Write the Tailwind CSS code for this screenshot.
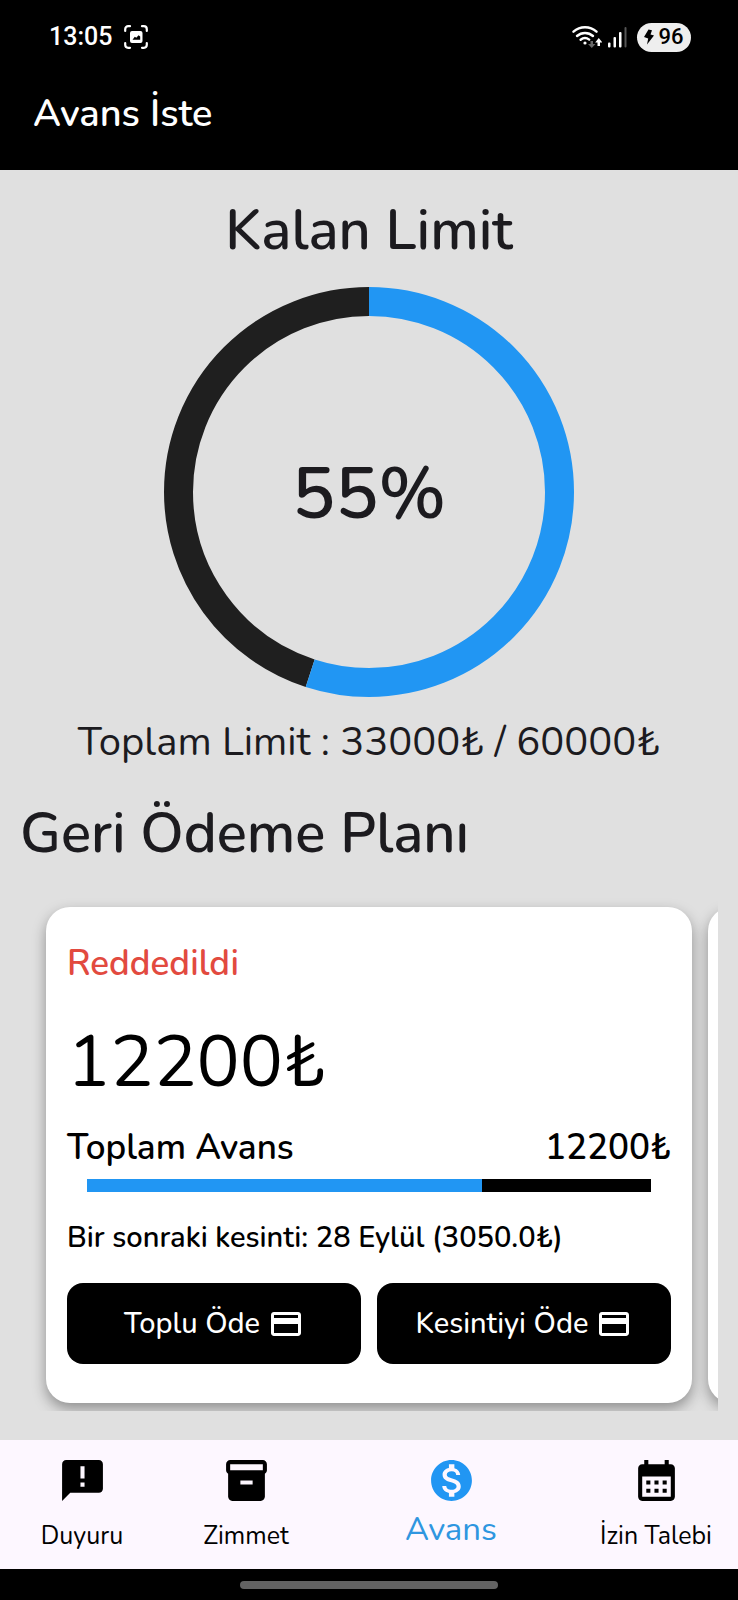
<!DOCTYPE html>
<html lang="tr">
<head>
<meta charset="utf-8">
<meta name="viewport" content="width=device-width, initial-scale=1">
<title>Avans İste</title>
<script src="https://cdn.jsdelivr.net/npm/@tailwindcss/browser@4"></script>
</head>
<body class="flex min-h-screen flex-col overflow-x-hidden bg-black font-['Nunito','Lato','Open_Sans',sans-serif] text-[#1c1b1f]">

<header class="bg-black pb-6 text-white">
  <div class="flex h-[74px] items-center justify-between pr-[47px] pl-[49px] font-['Roboto',sans-serif]">
    <div class="flex items-center gap-3">
      <span class="text-[25px] leading-9 font-medium">13:05</span>
      <svg class="size-6" viewBox="0 0 24 24" fill="none" stroke="currentColor" stroke-width="2.2" stroke-linecap="round" aria-hidden="true">
        <path d="M1.200 6V4.200a3 3 0 0 1 3-3H6M18 1.200h1.800a3 3 0 0 1 3 3V6M22.800 18v1.800a3 3 0 0 1-3 3H18M6 22.800H4.200a3 3 0 0 1-3-3V18"/>
        <path fill="currentColor" stroke="none" fill-rule="evenodd" d="M8 6h8.500a2 2 0 0 1 2 2v8a2 2 0 0 1-2 2H8a2 2 0 0 1-2-2V8a2 2 0 0 1 2-2zm.5 8.800h7.700v-3.200l-1.600-1.400-2.300 2.600-1.500-1z"/>
      </svg>
    </div>
    <div class="flex items-center">
      <svg class="h-6 w-[30px]" viewBox="0 0 30 24" fill="none" aria-hidden="true">
        <g stroke="#fff" stroke-width="2.400" stroke-linecap="round">
          <path d="M1.500 6.700a17 17 0 0 1 23 0"/>
          <path d="M5 11a12 12 0 0 1 16 0"/>
          <path d="M8.600 14.800a7 7 0 0 1 8.600-.2"/>
        </g>
        <circle cx="13" cy="18" r="1.600" fill="#fff"/>
        <path d="M18.500 16h2.500v3H23.500l-3.750 4-3.750-4h2.500z" fill="#666"/>
        <path d="M25.500 21h2.500V17.500h2.300L26.750 13l-3.550 4.500h2.300z" fill="#fff"/>
      </svg>
      <svg class="ml-[6px] h-[21px] w-5" viewBox="0 0 20 21" aria-hidden="true">
        <g fill="#fff"><rect x="0" y="15.500" width="2.500" height="5" rx="1"/><rect x="5.500" y="10" width="2.500" height="10.500" rx="1"/><rect x="11" y="5" width="2.500" height="15.500" rx="1"/></g>
        <rect x="16.500" y="0" width="2" height="20.500" rx="1" fill="#555"/>
      </svg>
      <div class="ml-[9px] flex h-[29px] w-[54px] items-center justify-center gap-1 rounded-full bg-[#eee] text-black">
        <svg class="h-4 w-[10px]" viewBox="0 0 10 16" fill="currentColor" aria-hidden="true"><path d="M4.500.5 8 1.200 6.500 5.500 10 6.500 3 15.500 4.200 9.500 0 8z"/></svg>
        <span class="text-[22px] leading-7 font-medium">96</span>
      </div>
    </div>
  </div>
  <h1 class="mt-2 px-[33px] text-[38px] leading-16 font-semibold">Avans İste</h1>
</header>

<main class="flex grow flex-col bg-[#e0e0e0] px-5 pt-[21px] pb-[29px]">
  <h2 class="text-center text-[56px] leading-20 font-semibold">Kalan Limit</h2>
  <div class="mt-4 grid place-items-center">
    <svg class="col-start-1 row-start-1 size-[410px]" viewBox="0 0 410 410" fill="none" stroke-width="29" role="img" aria-label="Kalan limit">
      <circle cx="205" cy="205" r="190.500" stroke="#1f1f1f" pathLength="100" stroke-dasharray="45 55" stroke-dashoffset="-55" transform="rotate(-90 205 205)"/>
      <circle cx="205" cy="205" r="190.500" stroke="#2196f3" pathLength="100" stroke-dasharray="55 45" transform="rotate(-90 205 205)"/>
    </svg>
    <span class="col-start-1 row-start-1 pt-1 text-[72px] leading-[88px] font-semibold">55%</span>
  </div>
  <p class="mt-[21px] text-center text-[40px] leading-12 whitespace-nowrap">Toplam Limit : 33000₺ / 60000₺</p>
  <h2 class="mt-7 text-[56px] leading-20 font-semibold">Geri Ödeme Planı</h2>

  <div class="mt-4 flex gap-4 overflow-hidden pt-[17px] pb-2 pl-[26px]">
    <article class="w-[calc(100%-26px)] shrink-0 rounded-3xl bg-white px-[21px] pt-[35px] pb-[39px] text-black shadow-[0_6px_14px_rgba(0,0,0,0.36)]">
      <p class="text-[35px] leading-11 font-semibold text-[#e24a3f]">Reddedildi</p>
      <p class="mt-8 text-[72px] leading-[88px]">12200₺</p>
      <div class="mt-5 flex justify-between text-[35px] leading-11 font-semibold">
        <span>Toplam Avans</span><span>12200₺</span>
      </div>
      <div class="mx-5 mt-[9px] h-[13px] bg-black"><div class="h-full bg-[#2196f3]" style="width:70%"></div></div>
      <p class="mt-7 text-[29px] leading-9 font-semibold">Bir sonraki kesinti: 28 Eylül (3050.0₺)</p>
      <div class="mt-[27px] grid grid-cols-2 gap-4 text-[29px] leading-9 font-medium text-white">
        <button type="button" class="flex h-[81px] items-center justify-center gap-2 rounded-2xl bg-black">Toplu Öde
          <svg class="size-9" viewBox="0 0 24 24" fill="currentColor" aria-hidden="true"><path d="M20 4H4c-1.110 0-1.990.890-1.990 2L2 18c0 1.110.890 2 2 2h16c1.110 0 2-.890 2-2V6c0-1.110-.890-2-2-2zm0 14H4v-6h16v6zm0-10H4V6h16v2z"/></svg>
        </button>
        <button type="button" class="flex h-[81px] items-center justify-center gap-2 rounded-2xl bg-black">Kesintiyi Öde
          <svg class="size-9" viewBox="0 0 24 24" fill="currentColor" aria-hidden="true"><path d="M20 4H4c-1.110 0-1.990.890-1.990 2L2 18c0 1.110.890 2 2 2h16c1.110 0 2-.890 2-2V6c0-1.110-.890-2-2-2zm0 14H4v-6h16v6zm0-10H4V6h16v2z"/></svg>
        </button>
      </div>
    </article>
    <article class="w-full shrink-0 rounded-3xl bg-white shadow-[0_6px_14px_rgba(0,0,0,0.36)]"></article>
  </div>
</main>

<nav class="grid h-[129px] grid-cols-[2fr_2fr_3fr_2fr] bg-[#fdf7ff] pt-4 text-[25px] leading-9 whitespace-nowrap text-black">
  <a href="#duyuru" class="flex flex-col items-center gap-[13px]">
    <svg class="size-[49px]" viewBox="0 0 24 24" fill="currentColor" aria-hidden="true"><path d="M20 2H4c-1.100 0-1.990.900-1.990 2L2 22l4-4h14c1.100 0 2-.900 2-2V4c0-1.100-.900-2-2-2zm-7 13h-2v-2h2v2zm0-4h-2V5h2v6z"/></svg>
    Duyuru
  </a>
  <a href="#zimmet" class="flex flex-col items-center gap-[13px]">
    <svg class="size-[49px]" viewBox="0 0 24 24" fill="currentColor" aria-hidden="true"><path d="M20 2H4c-1 0-2 .900-2 2v3.010c0 .720.430 1.340 1 1.690V20c0 1.100 1.100 2 2 2h14c.900 0 2-.900 2-2V8.700c.570-.350 1-.970 1-1.690V4c0-1.100-1-2-2-2zm-5 12H9v-2h6v2zm5-7H4V4h16v3z"/></svg>
    Zimmet
  </a>
  <a href="#avans" aria-current="page" class="flex flex-col items-center gap-[5px] text-[33px] leading-10 text-[#2f96e0]">
    <svg class="size-[49px]" viewBox="0 0 24 24" fill="#2196f3" aria-hidden="true"><path d="M12 2C6.480 2 2 6.480 2 12s4.480 10 10 10 10-4.480 10-10S17.520 2 12 2zm1.410 16.090V20h-2.670v-1.930c-1.710-.360-3.160-1.460-3.270-3.400h1.960c.100 1.050.820 1.870 2.650 1.870 1.960 0 2.400-.980 2.400-1.590 0-.830-.440-1.610-2.670-2.140-2.480-.600-4.180-1.620-4.180-3.670 0-1.720 1.390-2.840 3.110-3.210V4h2.670v1.950c1.860.450 2.790 1.860 2.850 3.390H14.300c-.050-1.110-.640-1.870-2.220-1.870-1.500 0-2.400.680-2.400 1.640 0 .840.650 1.390 2.670 1.910s4.180 1.390 4.180 3.910c-.010 1.830-1.380 2.830-3.120 3.160z"/></svg>
    Avans
  </a>
  <a href="#izin" class="flex flex-col items-center gap-[13px]">
    <svg class="size-[49px]" viewBox="0 0 24 24" fill="currentColor" aria-hidden="true"><path d="M19 4h-1V2h-2v2H8V2H6v2H5c-1.110 0-1.990.900-1.990 2L3 20c0 1.100.890 2 2 2h14c1.100 0 2-.900 2-2V6c0-1.100-.900-2-2-2zm0 16H5V10h14v10zM9 14H7v-2h2v2zm4 0h-2v-2h2v2zm4 0h-2v-2h2v2zm-8 4H7v-2h2v2zm4 0h-2v-2h2v2zm4 0h-2v-2h2v2z"/></svg>
    İzin Talebi
  </a>
</nav>
<div class="flex h-[31px] items-center justify-center bg-black">
  <div class="h-2 w-[35%] rounded-full bg-[#636363]"></div>
</div>
</body>
</html>
